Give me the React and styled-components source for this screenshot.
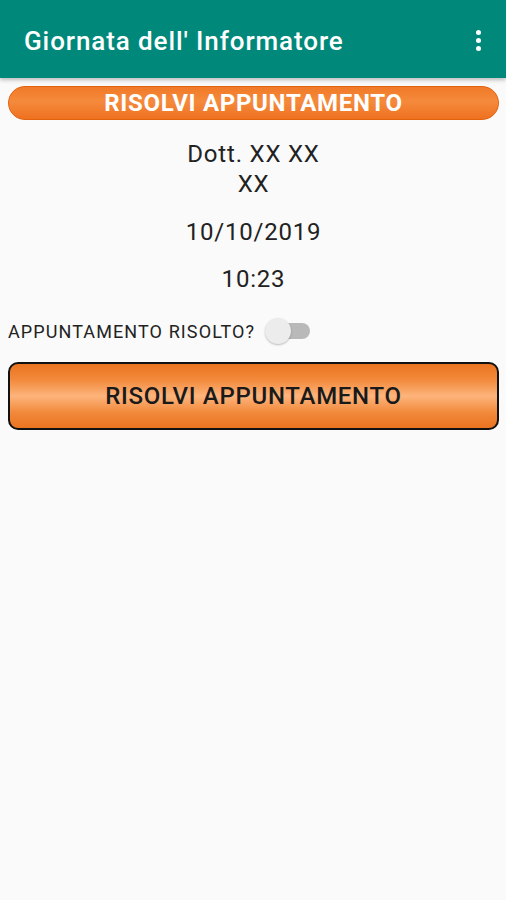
import React from "react";
import styled, { createGlobalStyle } from "styled-components";

const Global = createGlobalStyle`
  html, body { margin: 0; padding: 0; background: #fafafa; }
  body { font-family: Roboto, "Noto Sans", sans-serif; }
  #root { min-height: 900px; background: #fafafa; }
`;

const Page = styled.div`
  width: 506px;
  min-height: 900px;
  display: flex;
  flex-direction: column;
`;

const AppBar = styled.header`
  height: 78px;
  background: #00897b;
  display: flex;
  align-items: center;
  justify-content: space-between;
  padding: 3px 25px 0 24px;
  box-sizing: border-box;
  box-shadow: 0 2px 4px rgba(0, 0, 0, 0.25);
  position: relative;
  z-index: 1;
`;

const Title = styled.h1`
  margin: 0;
  color: #fff;
  font-size: 26px;
  font-weight: 500;
  letter-spacing: 0.9px;
`;

const Dots = styled.div`
  display: flex;
  flex-direction: column;
  gap: 3px;
`;

const Dot = styled.span`
  width: 5px;
  height: 5px;
  border-radius: 50%;
  background: #fff;
`;

const Content = styled.main`
  padding: 8px 7px 0 8px;
  display: flex;
  flex-direction: column;
`;

const Banner = styled.div`
  height: 34px;
  border-radius: 17px;
  border: 1.5px solid #e2620e;
  box-sizing: border-box;
  background: linear-gradient(to bottom, #f07a28 0%, #f58a3c 45%, #ee7120 100%);
  color: #fff;
  font-weight: 700;
  font-size: 24px;
  letter-spacing: 0.7px;
  display: flex;
  align-items: center;
  justify-content: center;
`;

const Info = styled.div`
  margin-top: ${(p) => p.$mt}px;
  text-align: center;
  color: #222;
  font-size: 24px;
  letter-spacing: 0.8px;
  line-height: 30px;
`;

const SwitchRow = styled.div`
  margin-top: 24px;
  display: flex;
  align-items: center;
  gap: 10px;
  height: 26px;
`;

const Label = styled.span`
  font-size: 18px;
  letter-spacing: 1.1px;
  color: #222;
`;

const Switch = styled.div`
  position: relative;
  width: 46px;
  height: 26px;
`;

const Track = styled.div`
  position: absolute;
  left: 11px;
  top: 5px;
  width: 34px;
  height: 16px;
  border-radius: 8px;
  background: #b9b9b9;
`;

const Thumb = styled.div`
  position: absolute;
  left: 0;
  top: 0;
  width: 26px;
  height: 26px;
  border-radius: 50%;
  background: #ececec;
  box-shadow: 0 1px 2px rgba(0, 0, 0, 0.25);
`;

const Button = styled.button`
  margin-top: 18px;
  height: 68px;
  border: 2px solid #111;
  border-radius: 10px;
  background: linear-gradient(
    to bottom,
    #ea7420 0%,
    #f28a3c 25%,
    #fdb47c 50%,
    #f28a3c 75%,
    #ea7420 100%
  );
  color: #1a1a1a;
  font-family: Roboto, "Noto Sans", sans-serif;
  font-size: 24px;
  font-weight: 500;
  letter-spacing: 0.7px;
  cursor: pointer;
  padding: 0;
`;

export default function App() {
  return (
    <Page>
      <Global />
      <AppBar>
        <Title>Giornata dell' Informatore</Title>
        <Dots>
          <Dot />
          <Dot />
          <Dot />
        </Dots>
      </AppBar>
      <Content>
        <Banner>RISOLVI APPUNTAMENTO</Banner>
        <Info $mt={19}>
          Dott. XX XX
          <br />
          XX
        </Info>
        <Info $mt={18}>10/10/2019</Info>
        <Info $mt={17}>10:23</Info>
        <SwitchRow>
          <Label>APPUNTAMENTO RISOLTO?</Label>
          <Switch>
            <Track />
            <Thumb />
          </Switch>
        </SwitchRow>
        <Button>RISOLVI APPUNTAMENTO</Button>
      </Content>
    </Page>
  );
}
